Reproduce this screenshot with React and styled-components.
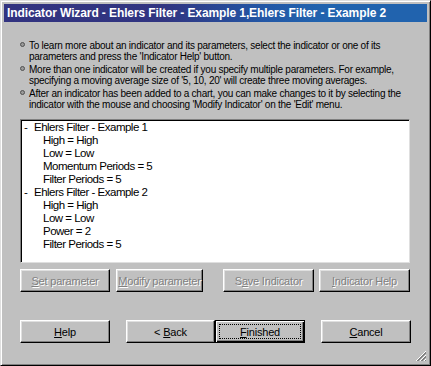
import React from "react";
import styled, { createGlobalStyle } from "styled-components";

const Global = createGlobalStyle`
  html, body {
    margin: 0;
    padding: 0;
    background: #c0c0c0;
  }
`;

const notes = [
  [
    "To learn more about an indicator and its parameters, select the indicator or one of its",
    "parameters and press the 'Indicator Help' button.",
  ],
  [
    "More than one indicator will be created if you specify multiple parameters.  For example,",
    "specifying a moving average size of '5, 10, 20' will create three moving averages.",
  ],
  [
    "After an indicator has been added to a chart, you can make changes to it by selecting the",
    "indicator with the mouse and choosing 'Modify Indicator' on the 'Edit' menu.",
  ],
];

const tree = [
  { name: "Ehlers Filter - Example 1", params: ["High = High", "Low = Low", "Momentum Periods = 5", "Filter Periods = 5"] },
  { name: "Ehlers Filter - Example 2", params: ["High = High", "Low = Low", "Power = 2", "Filter Periods = 5"] },
];

const App = () => {
  return (
    <>
      <Global />
      <Window>
        <TitleBar>Indicator Wizard - Ehlers Filter - Example 1,Ehlers Filter - Example 2</TitleBar>
        <Body>
          <Notes>
            {notes.map((lines) => (
              <Note key={lines[0]}>
                <Bullet />
                <NoteText>
                  {lines.map((l) => (
                    <div key={l}>{l}</div>
                  ))}
                </NoteText>
              </Note>
            ))}
          </Notes>

          <ListBox>
            {tree.map((t) => (
              <React.Fragment key={t.name}>
                <TreeRow>
                  <Dash>-</Dash>
                  {t.name}
                </TreeRow>
                {t.params.map((p, i) => (
                  <TreeRow key={i} $child>
                    {p}
                  </TreeRow>
                ))}
              </React.Fragment>
            ))}
          </ListBox>

          <ActionRow>
            <Button $w={90} disabled>
              <u>S</u>et parameter
            </Button>
            <Button $w={87} $ml={6} disabled>
              <u>M</u>odify parameter
            </Button>
            <Button $w={91} $ml={20} disabled>
              S<u>a</u>ve Indicator
            </Button>
            <Button $w={91} $ml={5} disabled>
              <u>I</u>ndicator Help
            </Button>
          </ActionRow>

          <Footer>
            <Button $w={90}>
              <u>H</u>elp
            </Button>
            <Button $w={89} $ml={16}>
              &lt; <u>B</u>ack
            </Button>
            <DefaultButton>
              <Focus>
                <u>F</u>inished
              </Focus>
            </DefaultButton>
            <Button $w={90} $ml={16}>
              <u>C</u>ancel
            </Button>
          </Footer>
        </Body>
        <Grip>
          <svg width="12" height="12" viewBox="0 0 12 12">
            <g strokeWidth="1">
              <line x1="11" y1="1" x2="1" y2="11" stroke="#ffffff" />
              <line x1="11" y1="2" x2="2" y2="11" stroke="#808080" />
              <line x1="11" y1="3" x2="3" y2="11" stroke="#808080" />
              <line x1="11" y1="5" x2="5" y2="11" stroke="#ffffff" />
              <line x1="11" y1="6" x2="6" y2="11" stroke="#808080" />
              <line x1="11" y1="7" x2="7" y2="11" stroke="#808080" />
              <line x1="11" y1="9" x2="9" y2="11" stroke="#ffffff" />
              <line x1="11" y1="10" x2="10" y2="11" stroke="#808080" />
            </g>
          </svg>
        </Grip>
      </Window>
    </>
  );
};

const Window = styled.div`
  position: relative;
  width: 431px;
  height: 366px;
  box-sizing: border-box;
  background: #c0c0c0;
  border-top: 1px solid #dfdfdf;
  border-left: 1px solid #dfdfdf;
  border-right: 1px solid #000;
  border-bottom: 1px solid #000;
  box-shadow: inset 1px 1px 0 #fff, inset -1px -1px 0 #808080;
  padding: 3px;
  font-family: "Liberation Sans", Arial, sans-serif;
  color: #000;
`;

const TitleBar = styled.div`
  height: 18px;
  line-height: 18px;
  padding-left: 3px;
  background: linear-gradient(to right, #323380 0%, #313581 38%, #2358a6 62%, #2163ae 75%, #2163ae 100%);
  color: #fff;
  font-weight: bold;
  font-size: 12px;
  letter-spacing: -0.1px;
  white-space: nowrap;
  overflow: hidden;
`;

const Body = styled.div`
  padding: 18px 0 0 16px;
`;

const Notes = styled.div`
  display: flex;
  flex-direction: column;
  gap: 2px;
`;

const Note = styled.div`
  display: flex;
  align-items: flex-start;
`;

const NoteText = styled.div`
  font-size: 10px;
  line-height: 11px;
  letter-spacing: -0.25px;
  white-space: nowrap;
`;

const Bullet = styled.span`
  flex: none;
  width: 5px;
  height: 5px;
  margin: 2px 4px 0 0;
  border-radius: 50%;
  background: #9a9a9a;
  border: 1px solid #505050;
  box-sizing: border-box;
`;

const ListBox = styled.div`
  margin-top: 9px;
  width: 390px;
  height: 144px;
  box-sizing: border-box;
  background: #fff;
  border-top: 1px solid #808080;
  border-left: 1px solid #808080;
  border-right: 1px solid #dfdfdf;
  border-bottom: 1px solid #dfdfdf;
  box-shadow: inset 1px 1px 0 #000;
  padding: 1px 0 0 3px;
`;

const TreeRow = styled.div`
  font-size: 11.5px;
  line-height: 13px;
  letter-spacing: -0.5px;
  white-space: nowrap;
  padding-left: ${(p) => (p.$child ? "19px" : "0")};
`;

const Dash = styled.span`
  display: inline-block;
  width: 10px;
`;

const ActionRow = styled.div`
  display: flex;
  margin-top: 6px;
`;

const Footer = styled.div`
  display: flex;
  margin-top: 28px;
`;

const Button = styled.button`
  width: ${(p) => p.$w}px;
  margin-left: ${(p) => p.$ml || 0}px;
  height: 23px;
  box-sizing: border-box;
  padding: 0;
  background: #c0c0c0;
  border-top: 1px solid #fff;
  border-left: 1px solid #fff;
  border-right: 1px solid #000;
  border-bottom: 1px solid #000;
  box-shadow: inset -1px -1px 0 #808080, inset 1px 1px 0 #dfdfdf;
  font-family: "Liberation Sans", Arial, sans-serif;
  font-size: 11px;
  letter-spacing: -0.2px;
  color: ${(p) => (p.disabled ? "#808080" : "#000")};
  text-shadow: ${(p) => (p.disabled ? "1px 1px 0 #fff" : "none")};
  white-space: nowrap;

  u {
    text-underline-offset: 1px;
  }
`;

const DefaultButton = styled(Button)`
  width: 90px;
  border: 1px solid #000;
  box-shadow: inset 1px 1px 0 #fff, inset -1px -1px 0 #000, inset -2px -2px 0 #808080;
  padding: 3px;
`;

const Focus = styled.span`
  display: flex;
  align-items: center;
  justify-content: center;
  height: 100%;
  box-sizing: border-box;
  border: 1px dotted #000;
`;

const Grip = styled.div`
  position: absolute;
  right: 3px;
  bottom: 3px;
  width: 12px;
  height: 12px;
  line-height: 0;
`;

export default App;
